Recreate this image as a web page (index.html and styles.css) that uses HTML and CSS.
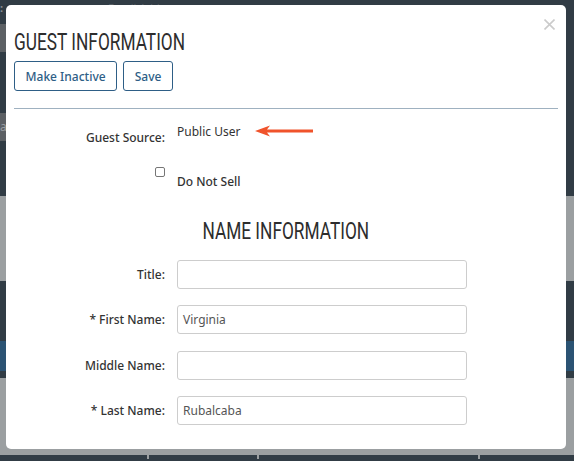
FILE: index.html
```html
<!DOCTYPE html>
<html>
<head>
<meta charset="utf-8">
<link rel="stylesheet" href="styles.css">
</head>
<body>
<div class="app">
  <div class="band dark top"><span class="dots">:</span><span class="ghost">Email Address</span></div>
  <div class="band dark side"><div class="chip"></div></div>
  <div class="band dark b1"></div>
  <div class="band dark side"><div class="chip">a</div></div>
  <div class="band dark b2"></div>
  <div class="band light b3"></div>
  <div class="band dark b4"></div>
  <div class="band blue b5"></div>
  <div class="band dark b6"></div>
  <div class="band light b7"></div>
  <div class="band dark foot">
    <div class="cell c1"></div><div class="cell c2"></div><div class="cell c3"></div><div class="cell c4"></div>
  </div>
</div>

<div class="modal">
  <svg class="close" width="11" height="11" viewBox="0 0 11 11"><path d="M0.5 0.5 L10.5 10.5 M10.5 0.5 L0.5 10.5" stroke="#cbcbcb" stroke-width="1.6"/></svg>
  <div class="modal-header">
    <h1 class="title"><span class="cond">GUEST INFORMATION</span></h1>
    <div class="actions">
      <button class="btn">Make Inactive</button>
      <button class="btn">Save</button>
    </div>
  </div>
  <div class="modal-body">
    <div class="row source">
      <label class="lbl">Guest Source:</label>
      <div class="value">
        <span>Public User</span>
        <svg class="arrow" width="60" height="12" viewBox="0 0 60 12"><path d="M0 6 L15 0.5 L12 4.6 L58 4.6 L58 7.4 L12 7.4 L15 11.5 Z" fill="#f0532b"/></svg>
      </div>
    </div>
    <div class="row dns">
      <div class="chk-cell"><span class="chk"></span></div>
      <div class="dns-text">Do Not Sell</div>
    </div>
    <h2 class="section"><span class="cond">NAME INFORMATION</span></h2>
    <div class="row field">
      <label class="lbl">Title:</label>
      <div class="input"></div>
    </div>
    <div class="row field">
      <label class="lbl">* First Name:</label>
      <div class="input">Virginia</div>
    </div>
    <div class="row field">
      <label class="lbl">Middle Name:</label>
      <div class="input"></div>
    </div>
    <div class="row field">
      <label class="lbl">* Last Name:</label>
      <div class="input">Rubalcaba</div>
    </div>
  </div>
</div>
</body>
</html>
```

FILE: styles.css
```css
* { box-sizing: border-box; }
html, body { margin: 0; padding: 0; }
body {
  width: 574px;
  height: 461px;
  overflow: hidden;
  position: relative;
  background: #313c45;
  font-family: "Noto Sans", "Open Sans", sans-serif;
}

.app { display: flex; flex-direction: column; width: 574px; }
.band { width: 100%; flex: none; }
.dark { background: #313c45; }
.light { background: #9b9fa1; }
.blue { background: #2b5373; }
.top { height: 24px; position: relative; color: #6f767b; font-size: 11px; }
.top .dots { display: inline-block; line-height: 14px; font-weight: bold; color: #8a9096; }
.top .ghost { display: inline-block; margin-left: 105px; color: #555d63; line-height: 10px; }
.side { height: 28px; display: flex; }
.chip { width: 60px; background: #5c6064; color: #9a9ea1; font-size: 12px; line-height: 28px; }
.b1 { height: 61px; }
.b2 { height: 55px; }
.b3 { height: 85px; }
.b4 { height: 60px; }
.b5 { height: 30px; }
.b6 { height: 7px; }
.b7 { height: 77px; }
.foot { height: 4px; display: flex; background: #9b9fa1; gap: 2px; }
.cell { background: #313c45; height: 4px; }
.c1 { width: 147px; }
.c2 { width: 108px; }
.c3 { width: 219px; }
.c4 { flex: 1; }

.modal {
  position: absolute;
  left: 6px;
  top: 5px;
  width: 560px;
  height: 444px;
  background: #fff;
  border-radius: 5px;
  padding: 0 8px;
}
.close {
  position: absolute;
  right: 11px;
  top: 14px;
  display: block;
}
.modal-header {
  padding-top: 23px;
  padding-bottom: 17px;
  border-bottom: 1px solid #9fb1c0;
}
.title, .section {
  margin: 0;
  font-family: "Roboto", sans-serif;
  font-weight: 400;
  font-size: 24px;
  line-height: 28px;
  color: #2d2d2d;
  white-space: nowrap;
}
.cond {
  display: inline-block;
  transform: scaleX(0.72);
  transform-origin: 0 50%;
}
.section .cond { transform-origin: 50% 50%; }
.actions { display: flex; gap: 6px; margin-top: 5px; }
.btn {
  height: 30px;
  padding: 0 10.5px;
  background: #fff;
  border: 1px solid #2e5e86;
  border-radius: 3px;
  color: #2e5e86;
  font-family: "Noto Sans", sans-serif;
  font-size: 12px;
  font-weight: 500;
}

.modal-body { padding-top: 14px; }
.row {
  display: grid;
  grid-template-columns: 151px 290px;
  column-gap: 12px;
}
.lbl {
  text-align: right;
  font-size: 12px;
  font-weight: 500;
  color: #333;
}
.source .lbl { padding-top: 6px; }
.value { display: flex; align-items: center; gap: 15px; font-size: 12px; color: #333; height: 16px; }
.arrow { display: block; }
.dns { margin-top: 20px; }
.chk-cell { display: flex; justify-content: flex-end; }
.chk {
  width: 10px; height: 10px;
  border: 1px solid #767676;
  border-radius: 2px;
  margin-top: 1px;
}
.dns-text { font-size: 12px; font-weight: 500; color: #333; padding-top: 7px; }

.section { margin-top: 27px; text-align: center; }
.field { align-items: center; margin-top: 16.5px; }
.section + .field { margin-top: 14.5px; }
.input {
  height: 29px;
  border: 1px solid #cdcdcd;
  border-radius: 3px;
  padding: 0 5px;
  font-size: 12px;
  line-height: 27px;
  color: #555;
}
```
